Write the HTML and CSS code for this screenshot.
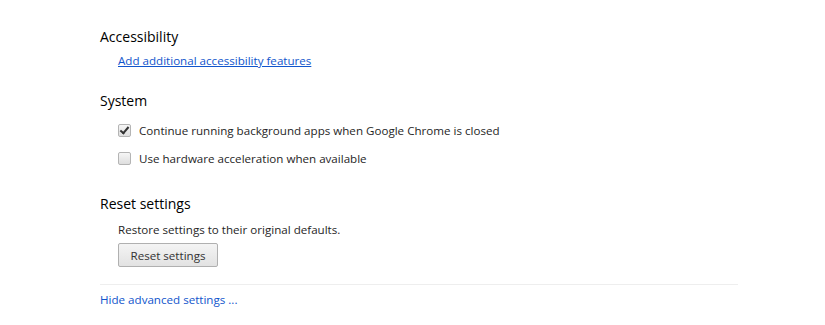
FILE: index.html
```html
<!DOCTYPE html>
<html lang="en">
<head>
  <meta charset="UTF-8">
  <title>Settings</title>
  <link rel="stylesheet" href="styles.css">
</head>
<body>
<main class="settings">
  <section class="group">
    <h3>Accessibility</h3>
    <div class="group-body">
      <a href="#" class="link">Add additional accessibility features</a>
    </div>
  </section>

  <section class="group">
    <h3>System</h3>
    <div class="group-body">
      <label class="check-row">
        <span class="checkbox checked"></span>
        <span>Continue running background apps when Google Chrome is closed</span>
      </label>
      <label class="check-row">
        <span class="checkbox"></span>
        <span>Use hardware acceleration when available</span>
      </label>
    </div>
  </section>

  <section class="group reset">
    <h3>Reset settings</h3>
    <div class="group-body">
      <div class="note">Restore settings to their original defaults.</div>
      <button class="btn">Reset settings</button>
    </div>
  </section>

  <footer class="footer">
    <a href="#" class="plain-link">Hide advanced settings ...</a>
  </footer>
</main>
</body>
</html>
```

FILE: styles.css
```css
body {
  margin: 0;
  background: #fff;
  color: #262626;
  font-family: "Open Sans", "Noto Sans", sans-serif;
  font-size: 11.6px;
}
.settings {
  width: 638px;
  margin-left: 100px;
  padding-top: 27px;
}
.group h3 {
  margin: 0;
  font-size: 14px;
  font-weight: normal;
  color: #000;
  line-height: 20px;
}
.group-body {
  padding-left: 18px;
}
.group {
  margin-bottom: 22px;
}
.link {
  display: block;
  margin-top: 5px;
  color: #1155cc;
  line-height: 17px;
}
.check-row {
  display: flex;
  align-items: center;
  gap: 8px;
  height: 28px;
}
.group-body .check-row:first-child {
  margin-top: 5px;
}
.checkbox {
  width: 11px;
  height: 11px;
  border: 1px solid #b4b4b4;
  border-radius: 2px;
  background: linear-gradient(#f6f6f6, #dedede);
  position: relative;
}
.checked::after {
  content: "";
  position: absolute;
  left: 3px;
  top: 0;
  width: 3px;
  height: 7px;
  border: solid #333;
  border-width: 0 2px 2px 0;
  transform: rotate(40deg);
}
.reset {
  margin-top: 14px;
  margin-bottom: 0;
}
.note {
  margin-top: 7px;
  line-height: 17px;
}
.btn {
  margin-top: 5px;
  height: 24px;
  width: 100px;
  font: inherit;
  color: #333;
  border: 1px solid #b0b0b0;
  border-radius: 2px;
  background: linear-gradient(#f4f4f4, #e2e2e2);
}
.footer {
  margin-top: 17px;
  border-top: 1px solid #eee;
  padding-top: 5px;
}
.plain-link {
  color: #1155cc;
  text-decoration: none;
  line-height: 20px;
}
```
